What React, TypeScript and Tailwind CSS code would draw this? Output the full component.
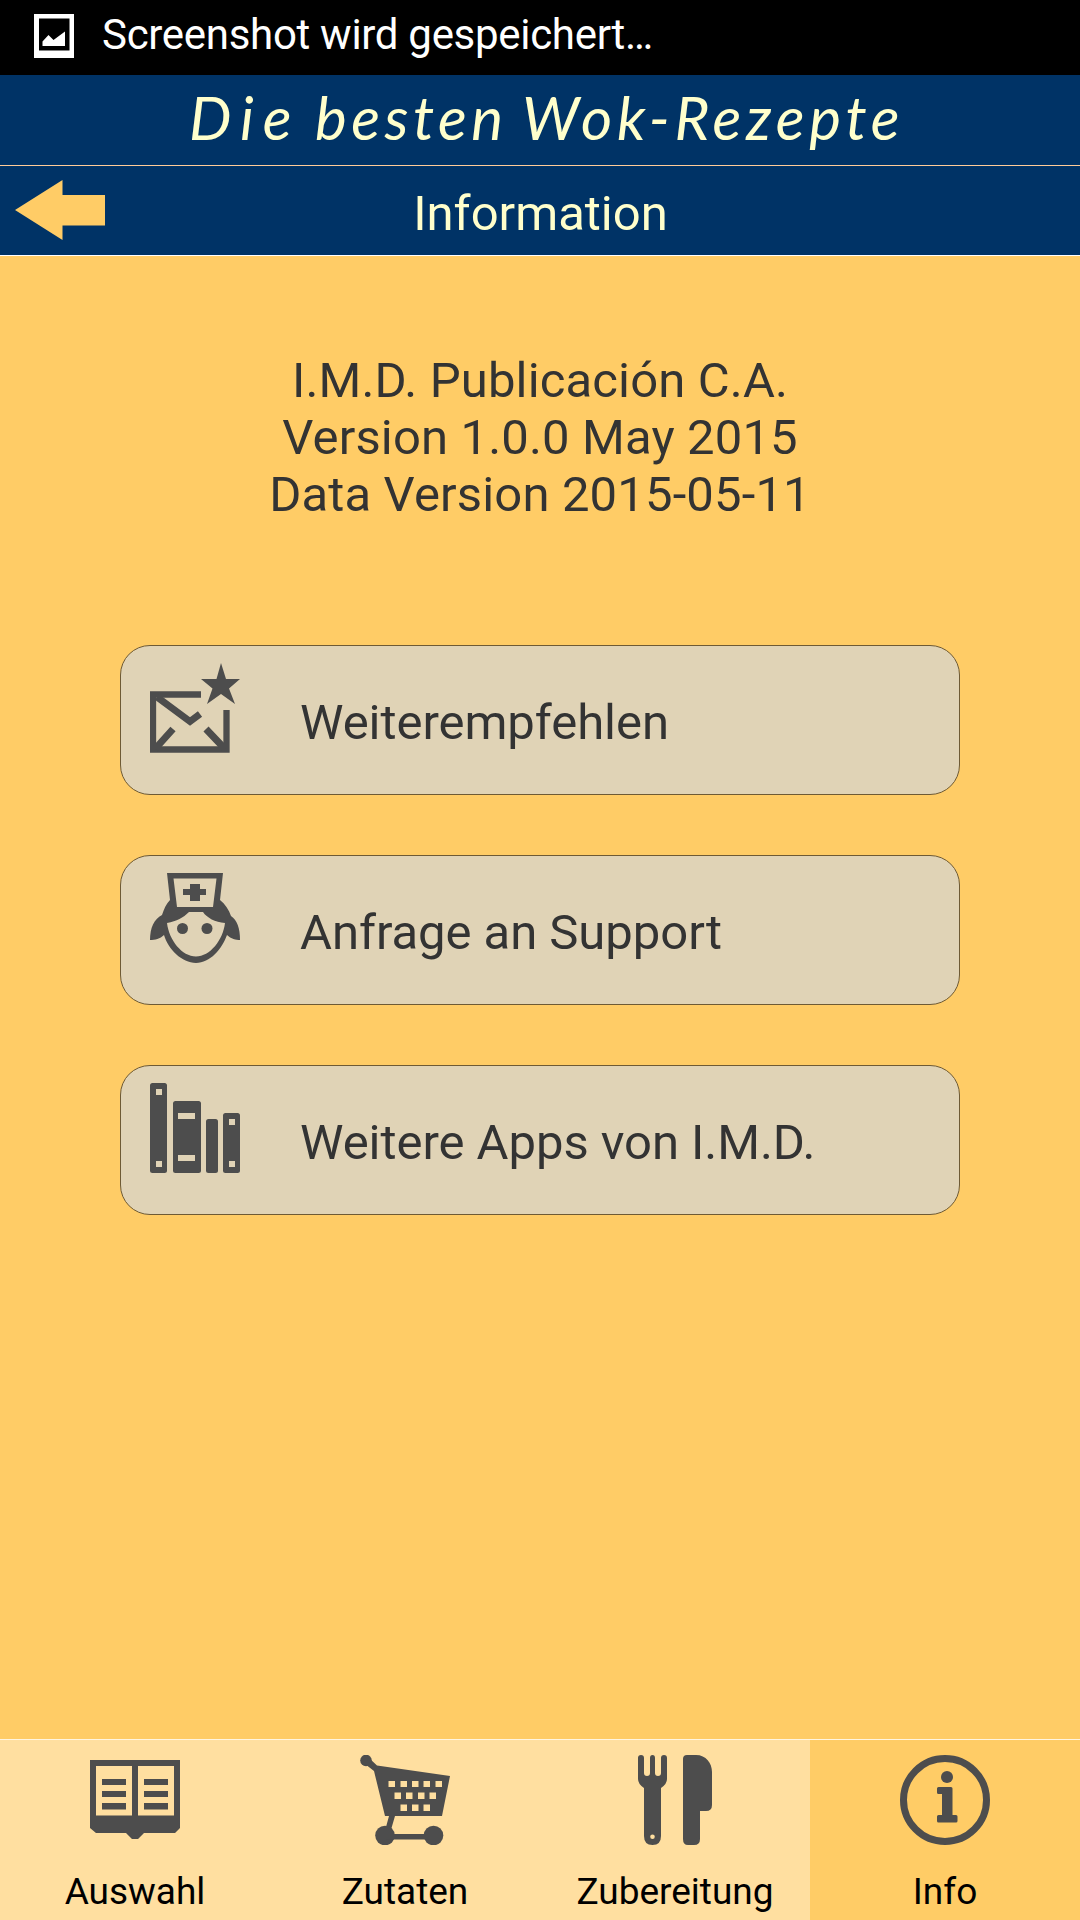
import type { ReactNode } from "react"

type Entry = {
  label: string
  icon: ReactNode
}

const MailStarIcon = () => (
  <svg viewBox="0 0 90 90" className="size-[90px] shrink-0" fill="none" stroke="#4d4d4d" strokeWidth="6.300">
    <path d="M51 31.500H3V86.500H76.500V47" />
    <path d="M7 34L40 58.500L50 51M5 86L23 66M75 86L56 66" strokeWidth="7" />
    <path d="M71 0L76 16H90L79 25.500L85 41L71 31L57 41L62.500 25.500L51 16H66.500Z" fill="#4d4d4d" stroke="none" />
  </svg>
)

const NurseIcon = () => (
  <svg viewBox="0 0 90 90" className="size-[90px] shrink-0" fill="#4d4d4d">
    <path
      fillRule="evenodd"
      d="M17 0H73L70 27C75 31 79 37 81 43C87 47 90 55 90 67C86 67 81 66 77 62C72 76 60 90 46 90C32 90 18 76 14 62C10 66 5 67 0 67C0 55 4 46 12 42C14 36 16 31 20 27ZM23.500 5.500L27 34H63L66.500 5.500ZM39 39C33 45 27 48 17 50C19 67 32 83.500 46 83.500C60 83.500 73 67 75 50C65 49 57 45 53 39Z"
    />
    <path d="M40 11H50V16H56V22H50V28H40V22H33V16H40Z" />
    <circle cx="32.500" cy="55.500" r="5.500" />
    <circle cx="57" cy="55.500" r="5.500" />
  </svg>
)

const BooksIcon = () => (
  <svg viewBox="0 0 90 90" className="size-[90px] shrink-0" fill="#4d4d4d">
    <rect width="17" height="90" rx="2.500" />
    <rect x="23" y="18" width="28" height="72" rx="2.500" />
    <rect x="56" y="36" width="12" height="54" rx="2.500" />
    <rect x="73" y="30" width="17" height="60" rx="2.500" />
    <g fill="#e0d3b6">
      <rect x="6" y="6" width="6" height="6" />
      <rect x="6" y="78" width="6" height="6" />
      <rect x="28" y="30" width="17" height="6" />
      <rect x="28" y="72" width="17" height="6" />
      <rect x="79" y="36" width="6" height="6" />
      <rect x="79" y="78" width="6" height="6" />
    </g>
  </svg>
)

const BookIcon = () => (
  <svg viewBox="0 0 90 90" className="size-[90px]" fill="#4d4d4d">
    <path
      fillRule="evenodd"
      d="M0 5H90V73L85 78H54L48 84H42L36 78H6L0 73ZM6 11V60.500H42V11ZM48 11V60.500H84V11Z"
    />
    <path d="M12 24H36V30H12ZM12 36H36V42H12ZM12 48H36V54.500H12ZM54 24H78V30H54ZM54 36H78V42H54ZM54 48H78V54.500H54Z" />
  </svg>
)

const CartIcon = () => (
  <svg viewBox="0 0 90 90" className="size-[90px]" fill="#4d4d4d">
    <circle cx="6" cy="5.500" r="5.800" />
    <circle cx="25" cy="80.500" r="9.800" />
    <circle cx="73.500" cy="80.500" r="9.800" />
    <path
      fillRule="evenodd"
      d="M9 3L17 10.500L90 21L82 61H35L31.500 73L33 79H70V84.500H26V72L29 61H25L14 16L5 9ZM28.500 26V32H35V26ZM40.500 26V32H47V26ZM52 26V32H58.500V26ZM63.500 26V32H70V26ZM75.500 26V32H82V26ZM34.500 37.500V44H41V37.500ZM46 37.500V44H52.500V37.500ZM58 37.500V44H64.500V37.500ZM69.500 37.500V44H76V37.500ZM40.500 49.500V56H47V49.500ZM52 49.500V56H58.500V49.500ZM63.500 49.500V56H70V49.500Z"
    />
  </svg>
)

const CutleryIcon = () => (
  <svg viewBox="0 0 90 90" className="size-[90px]" fill="#4d4d4d">
    <path
      fillRule="evenodd"
      d="M8 3Q8 0 11 0Q14 0 14 3V18Q14 21 17 21Q20 21 20 18V3Q20 0 22.500 0Q25 0 25 3V18Q25 21 28 21Q31 21 31 18V3Q31 0 34 0Q37 0 37 3V24Q37 29 31 33V81Q31 90 22.500 90Q14 90 14 81V33Q8 29 8 24ZM22.500 79.500A2.300 2.300 0 1 0 22.500 84.100A2.300 2.300 0 1 0 22.500 79.500Z"
    />
    <path d="M53 4Q53 0 57 0H66C76 0 82 8 82 17V50Q82 56 76 56H70V84Q70 90 64 90H58Q53 90 53 84Z" />
  </svg>
)

const InfoIcon = () => (
  <svg viewBox="0 0 90 90" className="size-[90px]" fill="#4d4d4d">
    <circle cx="45" cy="45" r="41.500" fill="none" stroke="#4d4d4d" strokeWidth="7" />
    <circle cx="47" cy="22" r="6" />
    <path d="M38.500 32H51Q52.500 32 52.500 33.500V60H56Q57.500 60 57.500 61.500V66Q57.500 67.500 56 67.500H38.500Q37 67.500 37 66V61.500Q37 60 38.500 60H42V39H38.500Q37 39 37 37.500V33.500Q37 32 38.500 32Z" />
  </svg>
)

const actions: Entry[] = [
  { label: "Weiterempfehlen", icon: <MailStarIcon /> },
  { label: "Anfrage an Support", icon: <NurseIcon /> },
  { label: "Weitere Apps von I.M.D.", icon: <BooksIcon /> },
]

const tabs: Entry[] = [
  { label: "Auswahl", icon: <BookIcon /> },
  { label: "Zutaten", icon: <CartIcon /> },
  { label: "Zubereitung", icon: <CutleryIcon /> },
  { label: "Info", icon: <InfoIcon /> },
]

export default function App() {
  const active = "Info"

  return (
    <div className="flex h-[1920px] w-[1080px] flex-col overflow-hidden bg-[#ffcc66] font-[Roboto,sans-serif]">
      {/* STATUS BAR */}
      <div className="flex h-[75px] shrink-0 items-start bg-black pl-[34px] text-white">
        <svg viewBox="0 0 40 44" className="mt-3.5 h-11 w-10">
          <path fill="#fff" fillRule="evenodd" d="M0 0H40V44H0ZM5 4.500V36.500H35.500V4.500Z" />
          <path fill="#fff" d="M8.500 32V27.500L14.500 21L19.500 26L31 17.500V32Z" />
        </svg>
        <p className="ml-7 mt-2.5 whitespace-nowrap text-[42px] leading-[49px] tracking-[-0.3px]">
          Screenshot wird gespeichert…
        </p>
      </div>

      {/* HEADER */}
      <header className="shrink-0 bg-[#003366] text-[#ffffcc]">
        <h1 className="flex h-[91px] items-start whitespace-nowrap border-b border-[#ffcc99] pl-[189px] pt-[7px] font-[Lato,sans-serif] text-[60px] italic leading-[70px]">
          <span className="w-[126px] tracking-[9px]">Die</span>
          <span className="w-[207px] tracking-[4.500px]">besten</span>
          <span className="tracking-[4.800px]">Wok-Rezepte</span>
        </h1>
        <div className="flex h-[90px] items-start border-b border-white">
          <button className="ml-[15px] mt-3.5 w-[90px]">
            <svg viewBox="0 0 90 60" className="h-[60px] w-[90px]">
              <path fill="#ffcc66" d="M0 30L47.500 0V15H90V45.500H47.500V60Z" />
            </svg>
          </button>
          <h2 className="mr-[104px] mt-[19px] flex-1 text-center text-[49px] leading-[57px]">Information</h2>
        </div>
      </header>

      {/* CONTENT */}
      <main className="flex-1">
        <div className="pt-24 text-center text-[49px] leading-[57px] tracking-[0.15px] text-[#333333]">
          <p>I.M.D. Publicación C.A.</p>
          <p>Version 1.0.0 May 2015</p>
          <p>Data Version 2015-05-11</p>
        </div>

        <div className="mx-[120px] mt-[122px] flex flex-col gap-[60px]">
          {actions.map((action) => (
            <button
              key={action.label}
              className="flex h-[150px] items-start rounded-[30px] border border-[#6e5a35] bg-[#e0d3b6] pl-[29px] pt-[17px] text-left text-[49px] leading-[57px] tracking-[-0.05px] text-[#333333]"
            >
              {action.icon}
              <span className="ml-[60px] mt-[31px]">{action.label}</span>
            </button>
          ))}
        </div>
      </main>

      {/* TABS */}
      <nav className="grid h-[181px] shrink-0 grid-cols-4 border-t border-[#fff5e0]">
        {tabs.map((tab) => (
          <button
            key={tab.label}
            className={`flex flex-col items-center pt-[15px] text-[37px] leading-[43px] text-black ${
              tab.label === active ? "" : "bg-[#ffdfa0]"
            }`}
          >
            {tab.icon}
            <span className="mt-[25px]">{tab.label}</span>
          </button>
        ))}
      </nav>
    </div>
  )
}
